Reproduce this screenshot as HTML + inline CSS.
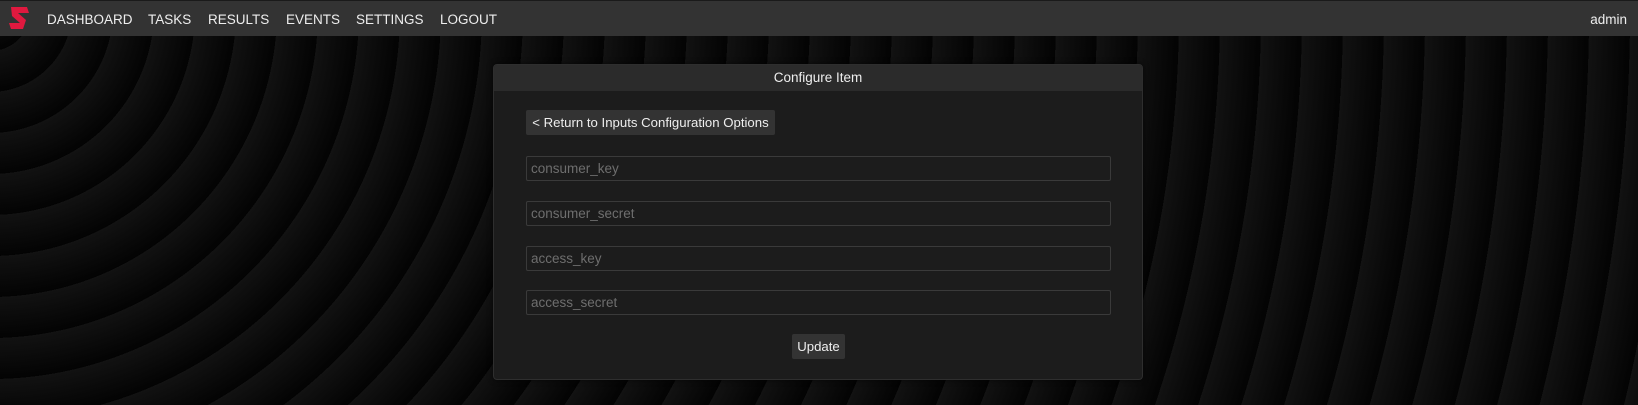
<!DOCTYPE html>
<html><head><meta charset="utf-8"><style>
*{box-sizing:border-box;margin:0;padding:0}
html,body{width:1638px;height:405px;overflow:hidden}
body{font-family:"Liberation Sans",sans-serif;font-size:14px;color:#eee;
background:repeating-radial-gradient(circle at -10px 10px,#121212 0,#030303 41px);position:relative}
.nav{position:absolute;left:0;top:0;width:1638px;height:36px;background:#333;border-top:1px solid #1a1a1a}
.nav a{position:absolute;top:10px;color:#eee;font-size:13.5px;text-decoration:none;line-height:17px}
.card{position:absolute;left:493px;top:64px;width:650px;height:316px;background:#1c1c1c;border:1px solid #2e2e2e;border-radius:4px;box-shadow:0 0 6px rgba(0,0,0,.6);overflow:hidden}
.hd{height:26px;background:#2b2b2b;text-align:center;line-height:26px;font-size:13.5px;color:#eee}
.btn{position:absolute;background:#333;border-radius:2px;color:#eee;font-size:13.2px;line-height:25px;text-align:center}
.in{position:absolute;left:32px;width:585px;height:25px;border:1px solid #3a3a3a;border-radius:2px;background:#1c1c1c;color:#6e6e6e;font-size:13.5px;line-height:23px;padding-left:4px}
</style></head><body>
<div class="nav">
<svg style="position:absolute;left:9px;top:6px" width="21" height="23" viewBox="0 0 21 23"><path d="M2 0H18L20 6H9L17 13L14 22H2L0 16H11L3 9Z" fill="#e0193f"/></svg>
<a style="left:47px">DASHBOARD</a>
<a style="left:148px">TASKS</a>
<a style="left:208px">RESULTS</a>
<a style="left:286px">EVENTS</a>
<a style="left:356px">SETTINGS</a>
<a style="left:440px">LOGOUT</a>
<a style="right:11px">admin</a>
</div>
<div class="card">
<div class="hd">Configure Item</div>
<div class="btn" style="left:32px;top:45px;width:249px">&lt; Return to Inputs Configuration Options</div>
<div class="in" style="top:91px">consumer_key</div>
<div class="in" style="top:136px">consumer_secret</div>
<div class="in" style="top:181px">access_key</div>
<div class="in" style="top:225px">access_secret</div>
<div class="btn" style="left:298px;top:269px;width:53px">Update</div>
</div>
</body></html>
